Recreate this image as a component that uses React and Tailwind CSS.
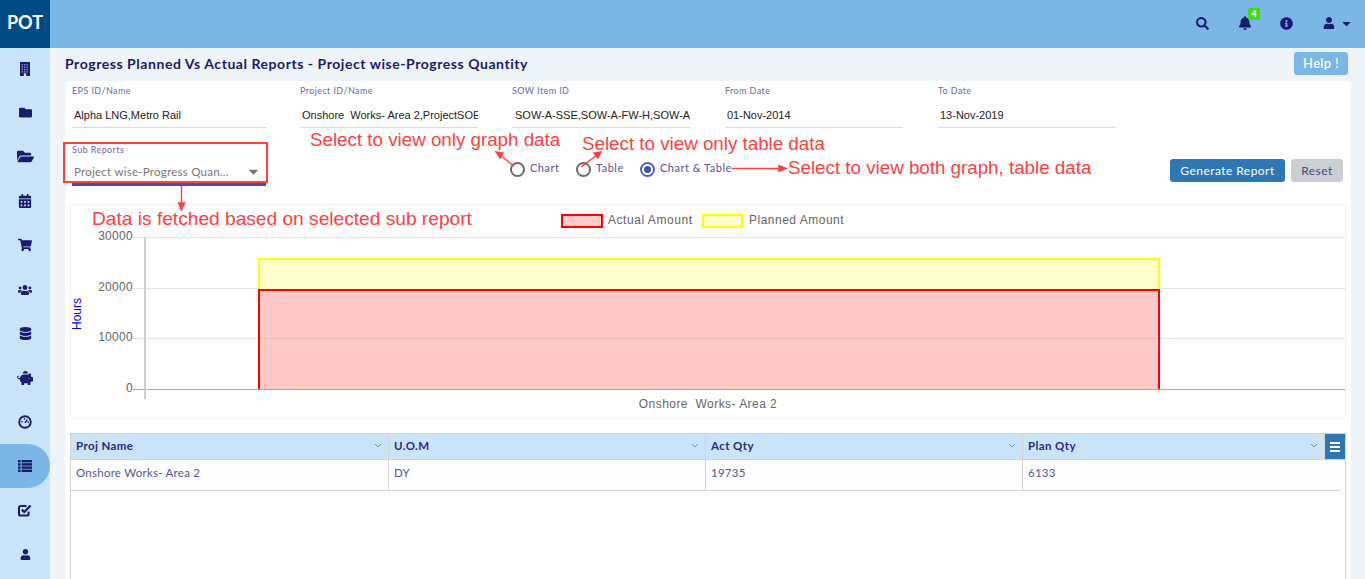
import {
  FaBell,
  FaCalendarAlt,
  FaCaretDown,
  FaDatabase,
  FaFolder,
  FaFolderOpen,
  FaInfoCircle,
  FaPiggyBank,
  FaSearch,
  FaShoppingCart,
  FaUser,
  FaUsers,
} from "react-icons/fa";

const lato = "font-['Lato',sans-serif]";
const arial = "font-['Liberation_Sans',Arial,sans-serif]";

function Building() {
  const cells = [];
  for (let y = 2; y < 10; y += 2.4) {
    for (let x = 1.6; x < 8; x += 2.4) {
      cells.push(<rect key={`${x}-${y}`} x={x} y={y} width="1.4" height="1.4" fill="#8f8fc0" />);
    }
  }
  return (
    <svg width="10" height="14" viewBox="0 0 10 14">
      <rect width="10" height="14" fill="#1a1a6e" />
      {cells}
      <rect x="3.8" y="11.4" width="2.4" height="2.6" fill="#c9e4f8" />
    </svg>
  );
}

function Gauge() {
  return (
    <svg width="14" height="14" viewBox="0 0 15 15" fill="none">
      <circle cx="7.5" cy="7.5" r="6.2" stroke="#1a1a6e" strokeWidth="2" />
      <path d="M7.5 8.5 L10 5" stroke="#1a1a6e" strokeWidth="1.6" />
      <circle cx="4.2" cy="7" r="0.9" fill="#1a1a6e" />
      <circle cx="7" cy="4.2" r="0.9" fill="#1a1a6e" />
      <circle cx="11" cy="7.6" r="0.9" fill="#1a1a6e" />
    </svg>
  );
}

function ListIcon() {
  return (
    <svg width="14" height="12" viewBox="0 0 14 12" fill="#1a1a6e">
      {[0, 3.2, 6.4, 9.6].map((y) => (
        <g key={y}>
          <rect x="0" y={y} width="2.6" height="2.4" />
          <rect x="3.6" y={y} width="10.4" height="2.4" />
        </g>
      ))}
    </svg>
  );
}

function CheckIcon() {
  return (
    <svg width="14" height="13" viewBox="0 0 14 13" fill="none" stroke="#1a1a6e">
      <path d="M10.6 7.5 V10 a1.6 1.6 0 0 1 -1.6 1.6 H2.6 A1.6 1.6 0 0 1 1 10 V3.6 A1.6 1.6 0 0 1 2.6 2 H8.5" strokeWidth="2" />
      <path d="M3.8 5.6 L6.3 8 L12.6 1.6" strokeWidth="2.2" />
    </svg>
  );
}

const sideIcons = [
  <Building />,
  <FaFolder size={13} />,
  <FaFolderOpen size={17} />,
  <FaCalendarAlt size={14} />,
  <FaShoppingCart size={14} />,
  <FaUsers size={14} />,
  <FaDatabase size={13} />,
  <FaPiggyBank size={16} />,
  <Gauge />,
  <ListIcon />,
  <CheckIcon />,
  <FaUser size={11} />,
];

const fields = [
  { label: "EPS ID/Name", value: "Alpha LNG,Metro Rail", width: "w-[194px]", gap: "mr-[34px]", pad: "pl-[2px]" },
  { label: "Project ID/Name", value: "Onshore  Works- Area 2,ProjectSOE", width: "w-[178px]", gap: "mr-[34px]", pad: "pl-[2px]" },
  { label: "SOW Item ID", value: "SOW-A-SSE,SOW-A-FW-H,SOW-A", width: "w-[178px]", gap: "mr-[35px]", pad: "pl-[3px]" },
  { label: "From Date", value: "01-Nov-2014", width: "w-[178px]", gap: "mr-[35px]", pad: "pl-[2px]" },
  { label: "To Date", value: "13-Nov-2019", width: "w-[178px]", gap: "", pad: "pl-[2px]" },
];

const columns = [
  { name: "Proj Name", value: "Onshore Works- Area 2", width: "w-[318px]" },
  { name: "U.O.M", value: "DY", width: "w-[317px]" },
  { name: "Act Qty", value: "19735", width: "w-[317px]" },
  { name: "Plan Qty", value: "6133", width: "flex-1" },
];

function Radio({ label, checked, className }) {
  return (
    <label className={`flex items-center gap-[5px] ${className}`}>
      <span
        className={`mt-[2px] flex h-[15px] w-[15px] items-center justify-center rounded-full border-2 ${
          checked ? "border-[#5060c0]" : "border-[#6b6b6b]"
        }`}
      >
        {checked && <span className="h-[7px] w-[7px] rounded-full bg-[#3f51b5]" />}
      </span>
      <span className="text-[11px] tracking-[0.5px] text-[#55558f]">{label}</span>
    </label>
  );
}

function Chart() {
  // page coordinates minus the chart box origin (71, 206)
  const grid = [
    { y: 31, label: "30000" },
    { y: 82, label: "20000" },
    { y: 132, label: "10000" },
    { y: 183, label: "0" },
  ];
  return (
    <svg width="1274" height="212" className={`overflow-visible ${arial}`}>
      <g transform="translate(0 1)">
        <rect x="491" y="9" width="40" height="12" fill="#ffcccc" stroke="#ff0000" strokeWidth="2" />
        <text x="537" y="18" fontSize="12" fill="#666" letterSpacing="0.55">Actual Amount</text>
        <rect x="632" y="9" width="39" height="12" fill="#ffffcc" stroke="#ffff00" strokeWidth="2" />
        <text x="678" y="18" fontSize="12" fill="#666" letterSpacing="0.5">Planned Amount</text>

        {grid.map((g) => (
          <g key={g.y}>
            <line x1="62" x2="1274" y1={g.y + 0.5} y2={g.y + 0.5} stroke={g.y === 183 ? "#a8a8a8" : "#e2e2e2"} />
            <text x="62" y={g.y + 3} fontSize="12" fill="#666" textAnchor="end" letterSpacing="0.3">{g.label}</text>
          </g>
        ))}
        <line x1="74" x2="74" y1="31" y2="193" stroke="#cfcfcf" strokeWidth="2" />

        <path d="M188 183 V53 H1088 V183 Z" fill="#ffffcc" />
        <path d="M188 183 V53 H1088 V183" fill="none" stroke="#ffff00" strokeWidth="2" />
        <path d="M188 183 V84 H1088 V183 Z" fill="#ffc9c9" />
        <path d="M188 183 V84 H1088 V183" fill="none" stroke="#ff0000" strokeWidth="2" />
        <line x1="188" x2="1088" y1="132.5" y2="132.5" stroke="#000" strokeOpacity="0.07" />

        <text x="637" y="202" fontSize="12" fill="#666" textAnchor="middle" letterSpacing="0.45" xmlSpace="preserve">Onshore  Works- Area 2</text>
        <text transform="translate(10 108) rotate(-90)" fontSize="12" fill="#0000ff" textAnchor="middle">Hours</text>
      </g>
    </svg>
  );
}

function Annotations() {
  const red = "#ff4040";
  const note = `absolute whitespace-nowrap leading-none text-[#ff4040] ${arial}`;
  return (
    <>
      <span className={`${note} left-[310px] top-[131px] text-[18.75px]`}>Select to view only graph data</span>
      <span className={`${note} left-[582px] top-[135px] text-[18.75px]`}>Select to view only table data</span>
      <span className={`${note} left-[788px] top-[159px] text-[18.75px]`}>Select to view both graph, table data</span>
      <span className={`${note} left-[92px] top-[209px] text-[19.15px]`}>Data is fetched based on selected sub report</span>
      <div className="absolute left-[63px] top-[142px] h-[41px] w-[205px] border-2 border-[#ff4040]" />
      <svg className="pointer-events-none absolute left-0 top-0" width="1365" height="579">
        <g stroke={red} strokeWidth="1.4" fill={red}>
          <line x1="514" y1="166" x2="500" y2="155" />
          <path d="M496 152 L503 153 L500 158 Z" />
          <line x1="581" y1="167" x2="597" y2="155" />
          <path d="M601 152 L598 158 L594 153 Z" />
          <line x1="732" y1="168.5" x2="780" y2="168.5" />
          <path d="M786 168.5 L779 165.5 L779 171.5 Z" />
          <line x1="181.5" y1="186" x2="181.5" y2="204" />
          <path d="M181.5 210 L178.5 203 L184.5 203 Z" />
        </g>
      </svg>
    </>
  );
}

function App() {
  return (
    <div className={`relative h-[579px] w-full overflow-hidden bg-[#eff4f8] ${lato}`}>
      {/* top bar */}
      <header className="flex h-12 items-center bg-[#7ab6e6]">
        <div className="flex h-12 w-[50px] items-center justify-center bg-[#004b83] pb-[3px] text-[18px] font-bold text-white">
          POT
        </div>
        <div className="ml-auto flex items-center pb-[2px] text-[#1a1a6e]">
          <FaSearch size={13} className="mr-[29px]" />
          <div className="relative mr-[28px]">
            <FaBell size={14} />
            <span className="absolute left-[10px] top-[-8px] flex h-[12px] w-[12px] items-center justify-center rounded-[2px] bg-[#3fdc14] text-[9px] font-bold text-white">
              4
            </span>
          </div>
          <FaInfoCircle size={13} className="mr-[30px]" />
          <FaUser size={12} />
          <FaCaretDown size={13} className="ml-[5px] mr-[12px]" />
        </div>
      </header>

      <div className="flex">
        {/* sidebar */}
        <aside className="h-[531px] w-[50px] shrink-0 bg-[#c9e4f8] text-[#1a1a6e]">
          <div className="-mt-[1.5px]">
            {sideIcons.map((icon, i) => (
              <div
                key={i}
                className={`flex h-[44.2px] items-center justify-center ${
                  i === 9 ? "rounded-r-[22px] bg-[#7ab6e6]" : ""
                }`}
              >
                {icon}
              </div>
            ))}
          </div>
        </aside>

        {/* main */}
        <main className="min-w-0 flex-1 pl-[15px] pr-[14px]">
          <div className="flex h-[33px] items-center justify-between">
            <h1 className="mb-[2px] text-[14px] font-bold tracking-[0.55px] text-[#1a1a6e]">
              Progress Planned Vs Actual Reports - Project wise-Progress Quantity
            </h1>
            <button className="mb-[2px] mr-[3px] h-[23px] w-[54px] rounded-[3px] bg-[#7ab6e6] text-[13px] font-semibold tracking-[0.3px] text-white">
              Help !
            </button>
          </div>

          <section className="h-[520px] rounded-t-[5px] bg-white px-[5px]">
            <div className="flex pl-[2px] pt-[4px]">
              {fields.map((f) => (
                <div key={f.label} className={`${f.width} ${f.gap}`}>
                  <div className="text-[9px] leading-[11px] tracking-[0.4px] text-[#6a6aa5]">{f.label}</div>
                  <div className={`mt-[7px] h-[25px] overflow-hidden whitespace-pre border-b border-[#dcdcdc] text-[11px] leading-[25px] text-[#222] ${f.pad} ${arial}`}>
                    {f.value}
                  </div>
                </div>
              ))}
            </div>

            <div className="flex items-start pl-[2px] pt-[16px]">
              <div className="h-[42px] w-[194px] shrink-0 border-b-[3px] border-[#3f51b5]">
                <div className="text-[9px] leading-[11px] tracking-[0.4px] text-[#6a6aa5]">Sub Reports</div>
                <div className="mt-[8px] flex items-center justify-between pl-[2px] pr-[5px] text-[11.5px] tracking-[0.25px] text-[#777]">
                  Project wise-Progress Quan...
                  <FaCaretDown size={15} className="text-[#777]" />
                </div>
              </div>
              <div className="ml-[244px] mt-[16px] flex">
                <Radio label="Chart" className="w-[66px]" />
                <Radio label="Table" className="w-[64px]" />
                <Radio label="Chart & Table" checked />
              </div>
              <div className="ml-auto mr-[3px] mt-[15px] flex gap-[6px]">
                <button className="h-[23px] w-[115px] rounded-[3px] bg-[#2c77b4] text-[12px] tracking-[0.45px] text-white">
                  Generate Report
                </button>
                <button className="h-[23px] w-[52px] rounded-[3px] bg-[#cbced3] text-[12px] tracking-[0.45px] text-[#4a4a7a]">
                  Reset
                </button>
              </div>
            </div>

            <div className="mt-[18px] h-[214px] rounded-[3px] border border-[#f0f0f0]">
              <Chart />
            </div>

            {/* table */}
            <div className="mt-[15px] h-[200px] border-x border-t border-[#d3d3d3]">
              <div className="flex h-[26px] border-b border-[#d3d3d3] bg-[#c9e4f8]">
                {columns.map((c) => (
                  <div
                    key={c.name}
                    className={`flex items-center justify-between border-r border-[#d3d3d3] pb-[2px] pl-[5px] pr-[6px] text-[11.5px] font-bold tracking-[0.4px] text-[#2a2a80] last:border-r-0 ${c.width}`}
                  >
                    {c.name}
                    <svg width="8" height="5" viewBox="0 0 8 5" fill="none">
                      <path d="M1 1 L4 4 L7 1" stroke="#7a8ab0" />
                    </svg>
                  </div>
                ))}
                <div className="flex w-[20px] items-center justify-center bg-[#2c77b4]">
                  <div className="flex w-[10px] flex-col gap-[2px]">
                    <span className="h-[2px] bg-white" />
                    <span className="h-[2px] bg-white" />
                    <span className="h-[2px] bg-white" />
                  </div>
                </div>
              </div>
              <div className="mr-[5px] flex h-[31px] border-b border-[#d3d3d3] bg-[#fdfdfd]">
                {columns.map((c) => (
                  <div
                    key={c.name}
                    className={`border-r border-[#d3d3d3] pl-[5px] text-[11.5px] leading-[25px] tracking-[0.25px] text-[#55558f] last:border-r-0 ${c.width}`}
                  >
                    {c.value}
                  </div>
                ))}
              </div>
            </div>
          </section>
        </main>
      </div>

      <Annotations />
    </div>
  );
}

export default App;
